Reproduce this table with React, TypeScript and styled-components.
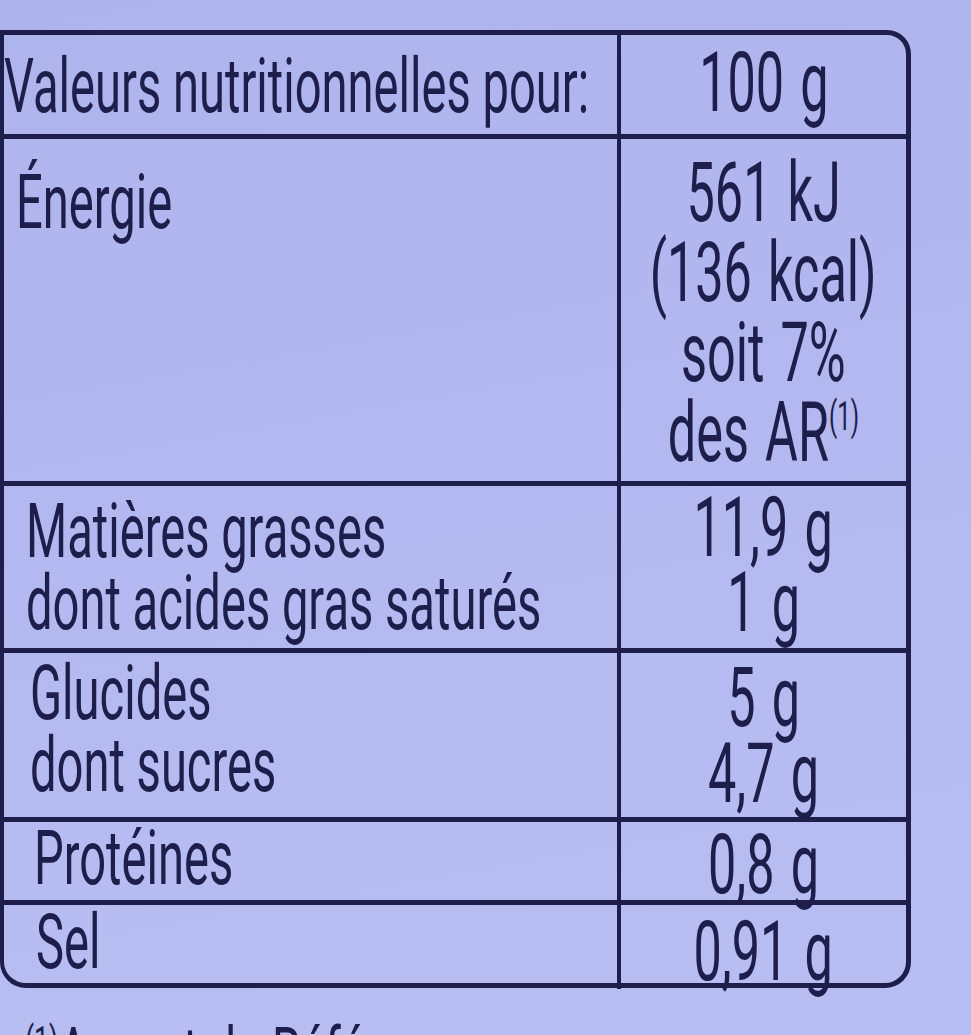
import React from 'react';
import styled, { createGlobalStyle } from 'styled-components';

const ink = '#1d1e4c';
const paper = '#b3b9ef';

const GlobalStyle = createGlobalStyle`
  html, body {
    margin: 0;
    padding: 0;
    background: ${paper};
  }
  body {
    font-family: Roboto, "Liberation Sans", sans-serif;
    color: ${ink};
  }
`;

const Page = styled.div`
  width: 971px;
  height: 1035px;
  overflow: hidden;
  background: linear-gradient(170deg, #aeb4ec 0%, #b4baf0 55%, #b9bef2 100%);
  padding-top: 30px;
  box-sizing: border-box;
`;

const Table = styled.div`
  width: 911px;
  border: 5px solid ${ink};
  border-left-width: 4px;
  border-radius: 0 24px 26px 26px;
  box-sizing: border-box;
`;

const Row = styled.div<{ h: number; last?: boolean }>`
  display: grid;
  grid-template-columns: 617px 1fr;
  height: ${(p) => p.h}px;
  border-bottom: ${(p) => (p.last ? 'none' : `5px solid ${ink}`)};
`;

const LabelCell = styled.div<{ indent: number; top: number }>`
  border-right: 4px solid ${ink};
  padding: ${(p) => p.top}px 0 0 ${(p) => p.indent}px;
`;

const ValueCell = styled.div<{ top: number }>`
  display: flex;
  flex-direction: column;
  align-items: center;
  padding-top: ${(p) => p.top}px;
  min-width: 0;
`;

const Line = styled.div`
  font-size: 76px;
  line-height: 72px;
  height: 72px;
  font-weight: 400;
  white-space: nowrap;
  transform: scaleX(0.62);
  transform-origin: left center;
`;

const ValueLine = styled.div<{ lh: number }>`
  width: max-content;
  font-size: 84px;
  line-height: ${(p) => p.lh}px;
  height: ${(p) => p.lh}px;
  font-weight: 400;
  white-space: nowrap;
  word-spacing: 6px;
  transform: scaleX(0.6);
  transform-origin: center center;
`;

const Sup = styled.sup`
  font-size: 40px;
  vertical-align: top;
  line-height: 40px;
  position: relative;
  top: 4px;
`;

const Footnote = styled.div`
  padding: 30px 0 0 38px;
  font-size: 70px;
  line-height: 70px;
  font-weight: 400;
  white-space: nowrap;
  transform: scaleX(0.66);
  transform-origin: left center;
`;

type Item = {
  labels: string[];
  values: React.ReactNode[];
  h: number;
  indent: number;
  labelTop: number;
  valueTop: number;
  lh: number;
};

const rows: Item[] = [
  { labels: ['Valeurs nutritionnelles pour:'], values: ['100 g'], h: 99, indent: 0, labelTop: 15, valueTop: 11, lh: 74 },
  {
    labels: ['Énergie'],
    values: [
      '561 kJ',
      '(136 kcal)',
      'soit 7%',
      <>
        des AR<Sup>(1)</Sup>
      </>,
    ],
    h: 342,
    indent: 12,
    labelTop: 27,
    valueTop: 14,
    lh: 80,
  },
  {
    labels: ['Matières grasses', 'dont acides gras saturés'],
    values: ['11,9 g', '1 g'],
    h: 162,
    indent: 22,
    labelTop: 9,
    valueTop: 4,
    lh: 75,
  },
  { labels: ['Glucides', 'dont sucres'], values: ['5 g', '4,7 g'], h: 164, indent: 26, labelTop: 4, valueTop: 7, lh: 76 },
  { labels: ['Protéines'], values: ['0,8 g'], h: 78, indent: 30, labelTop: 0, valueTop: 6, lh: 74 },
  { labels: ['Sel'], values: ['0,91 g'], h: 78, indent: 32, labelTop: 1, valueTop: 10, lh: 74 },
];

export default function App() {
  return (
    <>
      <GlobalStyle />
      <Page>
        <Table>
          {rows.map((r, i) => (
            <Row key={i} h={r.h} last={i === rows.length - 1}>
              <LabelCell indent={r.indent} top={r.labelTop}>
                {r.labels.map((l) => (
                  <Line key={l}>{l}</Line>
                ))}
              </LabelCell>
              <ValueCell top={r.valueTop}>
                {r.values.map((v, j) => (
                  <ValueLine key={j} lh={r.lh}>
                    {v}
                  </ValueLine>
                ))}
              </ValueCell>
            </Row>
          ))}
        </Table>
        <Footnote>
          <Sup>(1)</Sup>Apport de Référence
        </Footnote>
      </Page>
    </>
  );
}
